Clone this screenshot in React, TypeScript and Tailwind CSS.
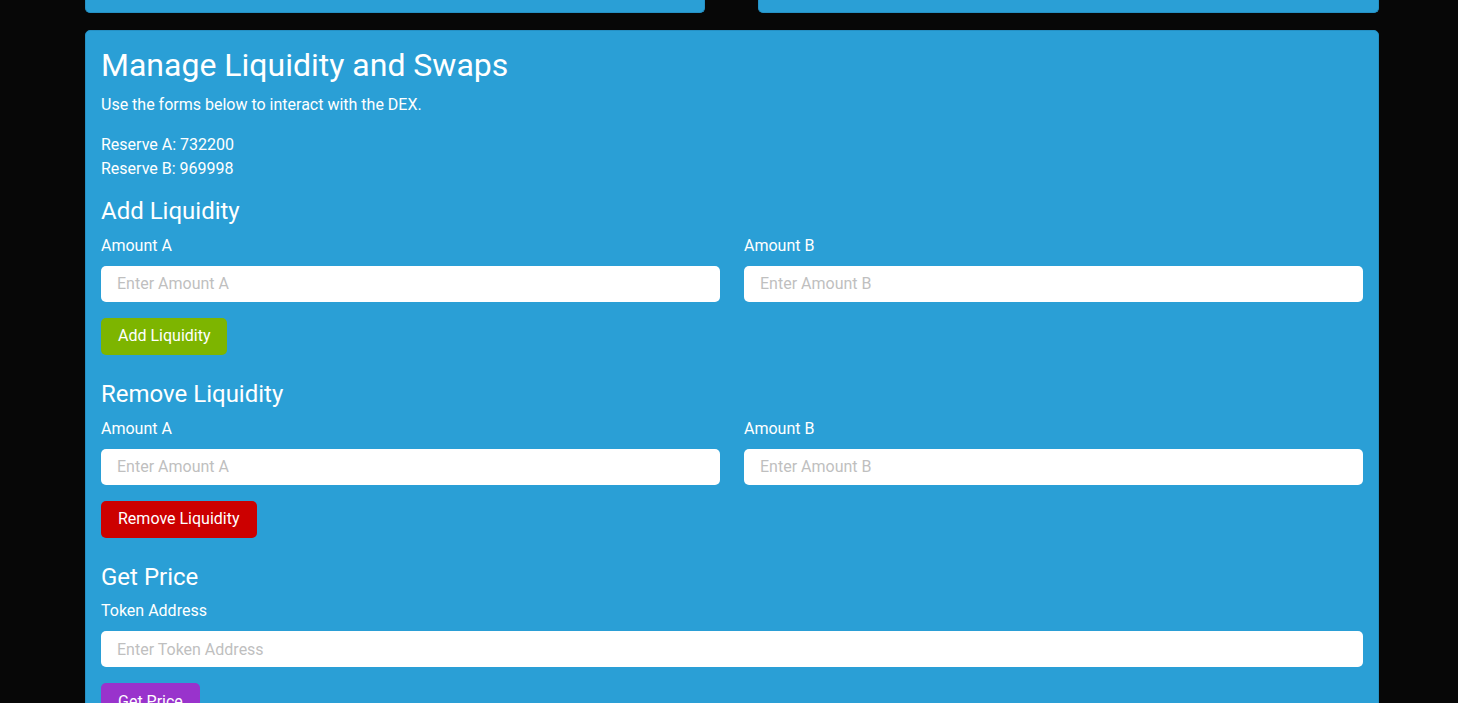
import React from 'react';

const font = { fontFamily: 'Roboto, "Noto Sans", sans-serif' };

function Field({ label, placeholder }: { label: string; placeholder: string }) {
  return (
    <div className="flex flex-col">
      <label className="text-[16px] leading-6 mb-2 text-white">{label}</label>
      <input
        placeholder={placeholder}
        className="h-9 w-full rounded-[5px] bg-white px-4 text-[16px] text-gray-800 placeholder:text-[#bfbfbf] outline-none"
      />
    </div>
  );
}

function Section({
  title,
  fields,
  button,
  color,
  first,
}: {
  title: string;
  fields: { label: string; placeholder: string }[];
  button: string;
  color: string;
  first?: boolean;
}) {
  return (
    <section className={first ? 'mt-4' : 'mt-[25px]'}>
      <h2 className="text-2xl leading-[28.8px] mb-2 text-white">{title}</h2>
      <div className={fields.length > 1 ? 'grid grid-cols-2 gap-6' : ''}>
        {fields.map((f) => (
          <Field key={f.label} label={f.label} placeholder={f.placeholder} />
        ))}
      </div>
      <button className={`mt-4 h-[37px] px-[17px] rounded-[5px] text-[16px] text-white ${color}`}>{button}</button>
    </section>
  );
}

export default function App() {
  return (
    <div className="min-h-screen bg-[#070707] overflow-hidden" style={font}>
      <div className="ml-[85px] w-[1294px]">
        {/* top cards, scrolled off */}
        <div className="flex gap-[53px]">
          <div className="h-[13px] w-[620px] rounded-b-[5px] bg-[#2a9fd6] border border-t-0 border-[#2590c4]" />
          <div className="h-[13px] flex-1 rounded-b-[5px] bg-[#2a9fd6] border border-t-0 border-[#2590c4]" />
        </div>

        {/* main panel */}
        <div className="mt-[17px] rounded-t-[5px] bg-[#2a9fd6] border border-[#2590c4] px-[15px] pt-[15px] pb-8 text-white">
          <h1 className="text-[32px] leading-[38px]">Manage Liquidity and Swaps</h1>
          <p className="mt-[9px] text-[16px] leading-6">Use the forms below to interact with the DEX.</p>
          <div className="mt-4 text-[16px] leading-6">
            <p>Reserve A: 732200</p>
            <p>Reserve B: 969998</p>
          </div>

          <Section
            first
            title="Add Liquidity"
            fields={[
              { label: 'Amount A', placeholder: 'Enter Amount A' },
              { label: 'Amount B', placeholder: 'Enter Amount B' },
            ]}
            button="Add Liquidity"
            color="bg-[#7db500]"
          />
          <Section
            title="Remove Liquidity"
            fields={[
              { label: 'Amount A', placeholder: 'Enter Amount A' },
              { label: 'Amount B', placeholder: 'Enter Amount B' },
            ]}
            button="Remove Liquidity"
            color="bg-[#cc0000]"
          />
          <Section
            title="Get Price"
            fields={[{ label: 'Token Address', placeholder: 'Enter Token Address' }]}
            button="Get Price"
            color="bg-[#9933cc]"
          />
        </div>
      </div>
    </div>
  );
}
